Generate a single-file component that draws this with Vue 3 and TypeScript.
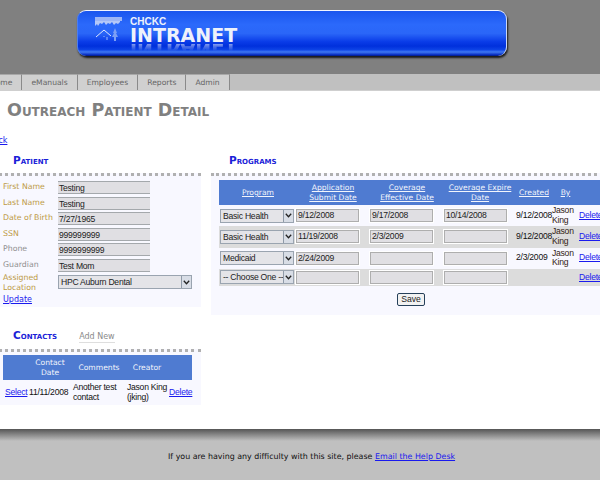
<script setup lang="ts">
const tabs = ['Home', 'eManuals', 'Employees', 'Reports', 'Admin']

const patientRows = [
  { label: 'First Name', value: 'Testing', tone: 'gold' },
  { label: 'Last Name', value: 'Testing', tone: 'gold' },
  { label: 'Date of Birth', value: '7/27/1965', tone: 'gold' },
  { label: 'SSN', value: '999999999', tone: 'gold' },
  { label: 'Phone', value: '9999999999', tone: 'grey' },
  { label: 'Guardian', value: 'Test Mom', tone: 'grey' },
]

const programs = [
  { program: 'Basic Health', submit: '9/12/2008', effective: '9/17/2008', expire: '10/14/2008', created: '9/12/2008', by: 'Jason King' },
  { program: 'Basic Health', submit: '11/19/2008', effective: '2/3/2009', expire: '', created: '9/12/2008', by: 'Jason King' },
  { program: 'Medicaid', submit: '2/24/2009', effective: '', expire: '', created: '2/3/2009', by: 'Jason King' },
  { program: '-- Choose One --', submit: '', effective: '', expire: '', created: '', by: '' },
]
</script>

<template>
  <div class="page">
    <header class="top">
      <div class="banner">
        <svg class="logo" width="27" height="24" viewBox="0 0 27 24">
          <rect x="0" y="0" width="27" height="4" fill="#9db6f6" />
          <path d="M0 4v5l2-2 1 2 2-3 2 1 2-2 2 3 2-2 2 1 2-2 2 3 2-2 2 1 2-2V4z" fill="#b4c8f8" />
          <path d="M1 20l8-7 7 6" fill="none" stroke="#dfe8ff" stroke-width="1" />
          <path d="M9 19v1M12 20v3" stroke="#9db8f8" stroke-width="1" />
          <path d="M20 11l-2 5h1l-2 4h2v4h2v-4h2l-2-4h1z" fill="#7c9ff5" />
        </svg>
        <div class="brand">
          <span class="brand-small">CHCKC</span>
          <span class="brand-big">INTRANET</span>
          <span class="brand-mirror" aria-hidden="true">INTRANET</span>
        </div>
      </div>
    </header>

    <nav class="nav">
      <a v-for="tab in tabs" :key="tab" class="tab">{{ tab }}</a>
    </nav>

    <main class="content">
      <h1 class="title">Outreach Patient Detail</h1>
      <a class="back link">Back</a>

      <div class="columns">
        <div class="left">
          <h2 class="heading">Patient</h2>
          <section class="panel patient">
            <div v-for="row in patientRows" :key="row.label" class="field">
              <span class="label" :class="row.tone">{{ row.label }}</span>
              <span class="input flat">{{ row.value }}</span>
            </div>
            <div class="field location">
              <span class="label gold">Assigned Location</span>
              <span class="select wide">
                <span class="select-text">HPC Auburn Dental</span>
                <span class="arrow"><svg width="7" height="5" viewBox="0 0 7 5"><path d="M.8.8l2.7 3 2.7-3" fill="none" stroke="#222" stroke-width="1.3" /></svg></span>
              </span>
            </div>
            <a class="link update">Update</a>
          </section>

          <div class="contacts-head">
            <h2 class="heading">Contacts</h2>
            <span class="add-new">Add New</span>
          </div>
          <section class="panel contacts">
            <div class="contact-table">
              <div class="contact-grid contact-header">
                <span></span>
                <span>Contact Date</span>
                <span>Comments</span>
                <span>Creator</span>
                <span></span>
              </div>
              <div class="contact-grid contact-row">
                <a class="link">Select</a>
                <span>11/11/2008</span>
                <span>Another test contact</span>
                <span>Jason King (jking)</span>
                <a class="link">Delete</a>
              </div>
            </div>
          </section>
        </div>

        <div class="right">
          <h2 class="heading programs-heading">Programs</h2>
          <section class="panel programs">
            <div class="program-grid program-header">
              <a>Program</a>
              <a>Application Submit Date</a>
              <a>Coverage Effective Date</a>
              <a>Coverage Expire Date</a>
              <a>Created</a>
              <a>By</a>
              <span></span>
            </div>
            <div
              v-for="(item, index) in programs"
              :key="index"
              class="program-grid program-row"
              :class="{ shaded: index % 2 === 1, short: !item.by }"
            >
              <span class="select">
                <span class="select-text">{{ item.program }}</span>
                <span class="arrow"><svg width="7" height="5" viewBox="0 0 7 5"><path d="M.8.8l2.7 3 2.7-3" fill="none" stroke="#222" stroke-width="1.3" /></svg></span>
              </span>
              <span class="input boxed">{{ item.submit }}</span>
              <span class="input boxed">{{ item.effective }}</span>
              <span class="input boxed">{{ item.expire }}</span>
              <span class="created">{{ item.created }}</span>
              <span class="by">{{ item.by }}</span>
              <a class="link">Delete</a>
            </div>
            <div class="save-row"><button class="save" type="button">Save</button></div>
          </section>
        </div>
      </div>
    </main>

    <footer class="footer">
      <span>If you are having any difficulty with this site, please <a class="link">Email the Help Desk</a></span>
    </footer>
  </div>
</template>

<style scoped>
.page {
  width: 640px;
  height: 480px;
  margin-left: -20px;
  display: flex;
  flex-direction: column;
  font-family: "Liberation Sans", Arial, sans-serif;
  font-size: 8.6px;
  letter-spacing: -0.25px;
  color: #111;
}

.top {
  height: 74px;
  flex: none;
  padding: 10px 0 0 97px;
  box-sizing: border-box;
  background: #808080;
}

.banner {
  width: 430px;
  height: 46px;
  box-sizing: border-box;
  padding: 5px 0 0 17px;
  display: flex;
  gap: 8px;
  overflow: hidden;
  border-top: 1px solid #f2f5ff;
  border-left: 1px solid #4c7df0;
  border-right: 1px solid #c9d6f8;
  border-radius: 9px;
  background: linear-gradient(#1a55ee 0%, #2b69fb 30%, #2a66f8 50%, #0a3ce8 68%, #0030dc 78%, #0d43e6 86%, #3f78f2 91%, #0a30c4 97%, #001a80 100%);
  box-shadow: 1px 2px 2px #1a1a1a;
}

.logo {
  flex: none;
  margin-top: 1px;
}

.brand {
  display: flex;
  flex-direction: column;
  color: #eef2fb;
  font-family: "DejaVu Sans", Verdana, sans-serif;
  font-weight: 700;
  letter-spacing: 0;
}

.brand-small {
  font-size: 10px;
  line-height: 11px;
  font-family: "Liberation Sans", Arial, sans-serif;
}

.brand-big {
  font-size: 19px;
  line-height: 18px;
  margin-top: -1px;
}

/* flipped copy: keep the foot of the letters next to the real word */
.brand-mirror {
  display: flex;
  align-items: flex-end;
  font-size: 19px;
  line-height: 14px;
  height: 7px;
  overflow: hidden;
  transform: scaleY(-1);
  opacity: 0.55;
  mask-image: linear-gradient(to bottom, transparent, #000);
}

.nav {
  height: 17px;
  flex: none;
  box-sizing: border-box;
  padding-left: 1px;
  display: flex;
  background: #c0c0c0;
  border-bottom: 1px solid #cfcfcf;
}

.tab {
  display: flex;
  align-items: center;
  padding: 0 9px;
  background: #d0d0d0;
  border-top: 1px solid #a8a8a8;
  border-right: 1px solid #8a8a8a;
  color: #666;
  font-family: "DejaVu Sans", Verdana, sans-serif;
  font-size: 7.6px;
  letter-spacing: 0;
}

.content {
  flex: 1;
  background: #fff;
  min-height: 0;
}

.title {
  margin: 10px 0 0 27px;
  font-family: "DejaVu Sans", Verdana, sans-serif;
  font-size: 17.5px;
  line-height: 18px;
  font-weight: 700;
  font-variant: small-caps;
  letter-spacing: 0;
  color: #808080;
}

.link {
  color: #1a1aee;
  text-decoration: underline;
}

.back {
  display: block;
  margin: 16px 0 0 8px;
  font-family: "DejaVu Sans", Verdana, sans-serif;
  font-size: 8px;
  letter-spacing: 0;
  line-height: 12px;
}

.columns {
  display: flex;
  gap: 10px;
  margin-top: 6px;
}

.left {
  width: 221px;
  flex: none;
}

.right {
  flex: 1;
  min-width: 0;
}

.heading {
  margin: 0 0 0 33px;
  font-family: "DejaVu Sans", Verdana, sans-serif;
  font-size: 10.5px;
  line-height: 14px;
  font-weight: 700;
  font-variant: small-caps;
  letter-spacing: 0;
  color: #1a22d8;
}

.programs-heading {
  margin-left: 18px;
}

.panel {
  border-top: 3px dotted #b0b0b0;
  margin-top: 6px;
  background: #f8f8ff;
}

.patient {
  padding: 5px 0 0 23px;
  height: 134px;
  box-sizing: border-box;
}

.field {
  display: grid;
  grid-template-columns: 55px auto;
  justify-content: start;
  align-items: start;
  height: 15.5px;
}

.label {
  padding-top: 1px;
  line-height: 10px;
  font-family: "DejaVu Sans", Verdana, sans-serif;
  font-size: 7.8px;
  letter-spacing: 0;
}

.gold {
  color: #bd9a45;
}

.grey {
  color: #8f8f8f;
}

.input {
  display: block;
  box-sizing: border-box;
  background: #e0dfe3;
  color: #222;
  overflow: hidden;
  white-space: nowrap;
}

.flat {
  width: 92px;
  height: 13px;
  line-height: 12px;
  padding-left: 1px;
  border-top: 1px solid #a4a8ac;
  border-bottom: 1px solid #a4a8ac;
}

.boxed {
  width: 63px;
  height: 13px;
  line-height: 11px;
  padding-left: 1px;
  border: 1px solid #aeaeae;
  box-shadow: 0 0 0 1px #fff;
}

.location {
  height: 21.5px;
  margin-top: -1px;
}

.location .label {
  line-height: 9.5px;
  padding-top: 0;
}

.select {
  display: flex;
  box-sizing: border-box;
  width: 74px;
  height: 14px;
  background: #e4e4e8;
  border: 1px solid #9aa4b0;
  line-height: 12px;
  color: #222;
}

.wide {
  width: 134px;
  margin-top: 2px;
}

.select-text {
  flex: 1;
  min-width: 0;
  padding-left: 2px;
  overflow: hidden;
  white-space: nowrap;
}

.arrow {
  flex: none;
  width: 9px;
  display: flex;
  align-items: center;
  justify-content: center;
  background: #d8dde6;
  border-left: 1px solid #8f9aa8;
}

.update {
  display: block;
  font-family: "DejaVu Sans", Verdana, sans-serif;
  font-size: 8px;
  letter-spacing: 0;
  line-height: 10px;
}

.contacts-head {
  display: flex;
  align-items: baseline;
  margin-top: 21px;
}

.add-new {
  margin-left: 22px;
  color: #8a8a8a;
  font-family: "DejaVu Sans", Verdana, sans-serif;
  font-size: 8px;
  letter-spacing: 0;
  border-bottom: 1px solid #dedede;
  line-height: 10px;
}

.contacts {
  height: 56px;
  box-sizing: border-box;
  padding: 3px 0 0 23px;
}

.contact-table {
  width: 189px;
}

.contact-grid {
  display: grid;
  grid-template-columns: 25px 44px 54px 42px 24px;
  align-items: center;
  height: 25px;
}

.contact-header {
  background: #4f7bd1;
  color: #f2f5fc;
  text-align: center;
  line-height: 9.5px;
  font-family: "DejaVu Sans", Verdana, sans-serif;
  font-size: 7.6px;
  letter-spacing: 0;
}

.contact-row {
  grid-template-columns: 24px 44px 54px 42px 23px;
  padding-left: 2px;
  line-height: 9.8px;
}

.programs {
  height: 142px;
  box-sizing: border-box;
  padding: 4px 0 0 8px;
  overflow: hidden;
}

.program-grid {
  display: grid;
  width: 410px;
  grid-template-columns: 76px 74px 74px 72px 36px 27px 32px;
  align-items: center;
  box-sizing: border-box;
  padding-left: 1px;
}

.program-header {
  height: 25px;
  background: #4f7bd1;
  color: #f2f5fc;
  text-align: center;
  line-height: 9.3px;
  font-family: "DejaVu Sans", Verdana, sans-serif;
  font-size: 7.6px;
  letter-spacing: 0;
}

.program-header a {
  padding: 0 3px;
  text-decoration: underline;
}

.program-header a:nth-child(n + 5) {
  padding: 0;
}

.program-row {
  height: 21.3px;
  line-height: 9.6px;
}

.program-row.short {
  height: 17px;
}

.shaded {
  background: #dcdcdc;
}

.created {
  white-space: nowrap;
}

.by {
  color: #321;
}

.save-row {
  width: 384px;
  text-align: center;
  margin-top: 7px;
}

.save {
  height: 13px;
  padding: 0 3px;
  font-family: inherit;
  font-size: 8.6px;
  line-height: 10px;
  color: #222;
  background: #f2f2f2;
  border: 1px solid #26405a;
  border-radius: 2px;
}

.footer {
  height: 51px;
  flex: none;
  box-sizing: border-box;
  padding: 22px 0 0 188px;
  font-family: "DejaVu Sans", Verdana, sans-serif;
  font-size: 7.92px;
  line-height: 12px;
  letter-spacing: 0;
  color: #111;
  background: linear-gradient(#555 0, #c0c0c0 12px, #c0c0c0 100%);
}
</style>

<style>
html,
body {
  overflow: hidden;
}
</style>
